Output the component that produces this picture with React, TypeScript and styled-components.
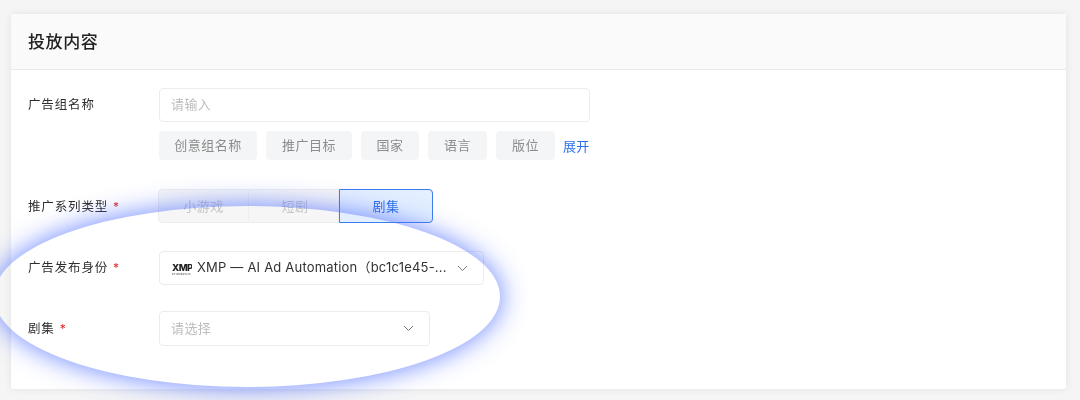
import React from "react";
import styled, { createGlobalStyle } from "styled-components";

const Global = createGlobalStyle`
  html, body { margin: 0; padding: 0; background: #f5f5f5; }
  body { font-family: "Inter", "Noto Sans CJK SC", sans-serif; width: 1080px; height: 400px; overflow: hidden; }
  * { box-sizing: border-box; }
`;

const Page = styled.div`
  position: relative;
  width: 1080px;
  height: 400px;
  padding: 14px 14px 11px 11px;
  overflow: hidden;
  filter: blur(0.35px);
`;

const Card = styled.section`
  height: 375px;
  background: #fff;
  border-radius: 3px;
  box-shadow: 0 0 8px rgba(0, 0, 0, 0.08);
  overflow: hidden;
`;

const CardHeader = styled.header`
  height: 56px;
  padding: 0 17px 3px;
  display: flex;
  align-items: center;
  background: #fafafa;
  border-bottom: 1px solid #ebebeb;
`;

const Title = styled.h2`
  margin: 0;
  font-size: 17px;
  font-weight: 500;
  letter-spacing: 0.6px;
  color: #222;
`;

const Form = styled.div`
  padding: 18px 17px 0;
  display: flex;
  flex-direction: column;
`;

const Row = styled.div<{ $gap: number }>`
  display: grid;
  grid-template-columns: 131px 1fr;
  align-items: start;
  margin-bottom: ${(p) => p.$gap}px;
`;

const Label = styled.label<{ $drop?: number }>`
  font-size: 12.5px;
  line-height: 34px;
  height: 34px;
  padding-top: ${(p) => p.$drop ?? 0}px;
  letter-spacing: 0.85px;
  color: #2e2e2e;
  display: flex;
  align-items: baseline;
`;

const Required = styled.span`
  color: #e5252a;
  font-size: 12px;
  margin-left: 5px;
`;

const Field = styled.div`
  display: flex;
  flex-direction: column;
  align-items: flex-start;
`;

const TextInput = styled.div`
  width: 431px;
  height: 34px;
  padding: 0 11px 3px;
  display: flex;
  align-items: center;
  background: #fff;
  border: 1px solid #ececec;
  border-radius: 4px;
  font-size: 13px;
  letter-spacing: 0.4px;
  color: #bdbdbd;
`;

const TagRow = styled.div`
  margin-top: 9px;
  width: 432px;
  display: flex;
  align-items: center;
  gap: 9px;
`;

const Tag = styled.span<{ $w: number }>`
  width: ${(p) => p.$w}px;
  height: 29px;
  padding-bottom: 2px;
  display: flex;
  align-items: center;
  justify-content: center;
  background: #f4f5f7;
  border-radius: 4px;
  font-size: 13px;
  letter-spacing: 0.5px;
  color: #8c8c8c;
`;

const Expand = styled.a`
  margin-left: -1px;
  font-size: 13px;
  letter-spacing: 0.2px;
  color: #2c6fe8;
`;

const Segmented = styled.div`
  display: flex;
  width: 275px;
  height: 34px;
  margin-left: -1px;
`;

const Segment = styled.div<{ $active?: boolean; $w: number; $nudge?: number }>`
  width: ${(p) => p.$w}px;
  padding: 0 0 2px ${(p) => p.$nudge ?? 0}px;
  display: flex;
  align-items: center;
  justify-content: center;
  font-size: 13px;
  letter-spacing: 0.5px;
  color: ${(p) => (p.$active ? "#2c6fe8" : "#c4c4c4")};
  background: ${(p) => (p.$active ? "#e3efff" : "#f6f6f6")};
  border: 1px solid ${(p) => (p.$active ? "#3d7bf0" : "#eeeeee")};
  border-left-width: ${(p) => (p.$active ? 1 : 0)}px;
  &:first-child { border-left-width: 1px; border-radius: 4px 0 0 4px; }
  &:last-child { border-radius: 0 4px 4px 0; }
`;

const Select = styled.div<{ $w: number; $h?: number; $pad?: number }>`
  width: ${(p) => p.$w}px;
  height: ${(p) => p.$h ?? 34}px;
  padding: 0 15px 0 ${(p) => p.$pad ?? 12}px;
  display: flex;
  align-items: center;
  background: #fff;
  border: 1px solid #ececec;
  border-radius: 4px;
  font-size: 13px;
  letter-spacing: 0.2px;
  color: #333;
`;

const LogoMark = styled.svg`
  width: 20px;
  height: 15px;
  margin-right: 5px;
  flex: none;
`;

const SelectValue = styled.span`
  flex: 1;
  min-width: 0;
  padding-bottom: 3px;
  white-space: nowrap;
`;

const Placeholder = styled.span`
  flex: 1;
  padding-bottom: 3px;
  letter-spacing: 0.4px;
  color: #bdbdbd;
`;

const Chevron = styled.svg`
  width: 11px;
  height: 7px;
  margin-left: 10px;
  flex: none;
  fill: none;
  stroke: #7d7d7d;
  stroke-width: 1;
`;

const Glow = styled.div`
  position: absolute;
  left: -6px;
  top: 206px;
  width: 506px;
  height: 181px;
  border-radius: 50%;
  pointer-events: none;
  box-shadow: 0 0 24px 2px rgba(80, 112, 255, 0.76);
`;

const ChevronIcon = () => (
  <Chevron viewBox="0 0 11 7">
    <path d="M1 1 L5.5 5.5 L10 1" />
  </Chevron>
);

const tags: [string, number][] = [
  ["创意组名称", 98],
  ["推广目标", 86],
  ["国家", 58],
  ["语言", 59],
  ["版位", 59],
];

export default function App() {
  return (
    <Page>
      <Global />
      <Card>
        <CardHeader>
          <Title>投放内容</Title>
        </CardHeader>
        <Form>
          <Row $gap={29}>
            <Label>广告组名称</Label>
            <Field>
              <TextInput>请输入</TextInput>
              <TagRow>
                {tags.map(([t, w]) => (
                  <Tag key={t} $w={w}>{t}</Tag>
                ))}
                <Expand>展开</Expand>
              </TagRow>
            </Field>
          </Row>
          <Row $gap={28}>
            <Label $drop={1}>推广系列类型<Required>*</Required></Label>
            <Field>
              <Segmented>
                <Segment $w={91}>小游戏</Segment>
                <Segment $w={90} $nudge={3}>短剧</Segment>
                <Segment $w={94} $active>剧集</Segment>
              </Segmented>
            </Field>
          </Row>
          <Row $gap={26}>
            <Label>广告发布身份<Required>*</Required></Label>
            <Field>
              <Select $w={325}>
                <LogoMark viewBox="0 0 20 15">
                  <text x="0" y="10" fontFamily="Inter, sans-serif" fontSize="9.5" fontWeight="800" letterSpacing="-0.6" fill="#222">XMP</text>
                  <text x="0" y="13.5" fontFamily="Inter, sans-serif" fontSize="2.4" fontWeight="600" fill="#555">BY MOBVISTA</text>
                </LogoMark>
                <SelectValue>XMP — AI Ad Automation（bc1c1e45-...</SelectValue>
                <ChevronIcon />
              </Select>
            </Field>
          </Row>
          <Row $gap={0}>
            <Label $drop={1}>剧集<Required>*</Required></Label>
            <Field>
              <Select $w={271} $h={35} $pad={11}>
                <Placeholder>请选择</Placeholder>
                <ChevronIcon />
              </Select>
            </Field>
          </Row>
        </Form>
      </Card>
      <Glow />
    </Page>
  );
}
